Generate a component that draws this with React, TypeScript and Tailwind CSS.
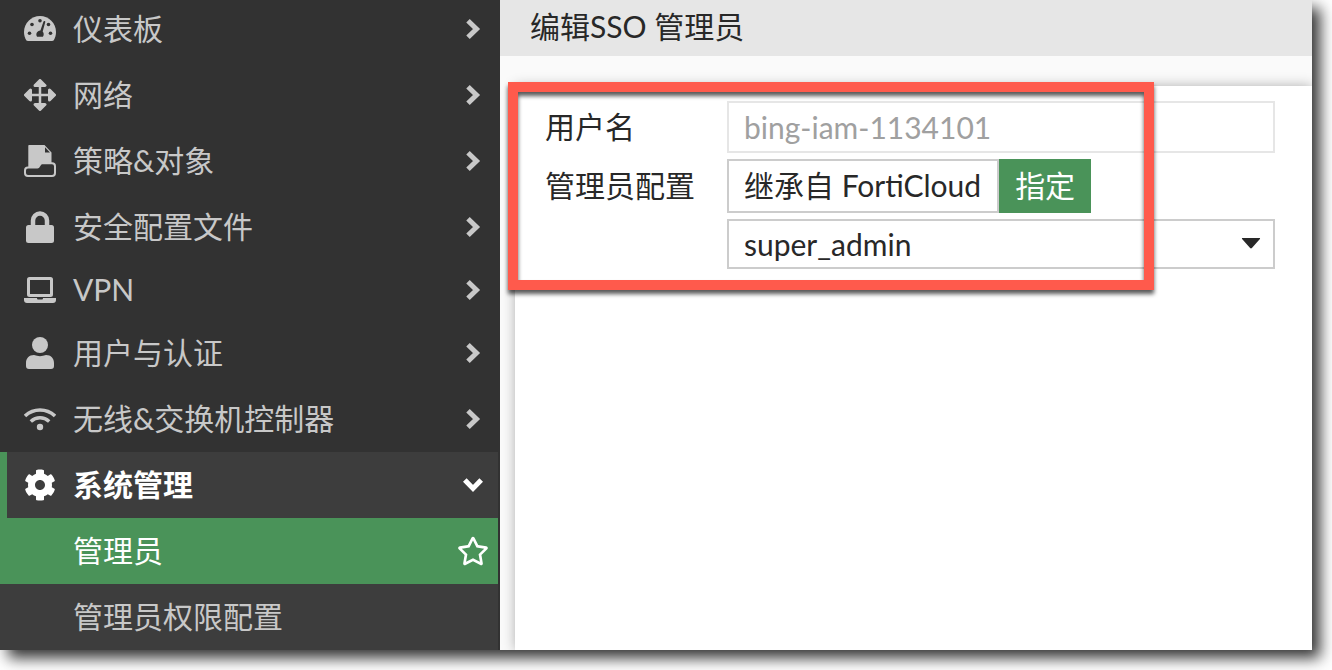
import React from "react";
import { FaCog, FaRegStar } from "react-icons/fa";

const GaugeIcon = () => (
    <svg width="32" height="32" viewBox="0 0 32 32" fill="currentColor" aria-hidden="true">
        <path d="M16 3C7.2 3 0 10.2 0 19c0 3 .8 5.600 2.200 8.200.5.600 1 .8 1.800.8h24c.8 0 1.300-.2 1.800-.8C31.200 24.600 32 22 32 19 32 10.200 24.800 3 16 3z" />
        <g fill="#323232">
            <circle cx="16" cy="7.800" r="1.800" />
            <circle cx="8" cy="11.500" r="1.800" />
            <circle cx="24.500" cy="11.500" r="1.800" />
            <circle cx="5.500" cy="20.200" r="1.800" />
            <circle cx="26.500" cy="20.200" r="1.800" />
            <path d="M19.500 8.600c.3-1 2.100-.7 1.800.5l-2.600 9.300c1.300 1.300 1.400 3.600.2 5.300h-5.800c-1.700-2.500-.3-5.700 3.300-6.100z" />
        </g>
    </svg>
);

const ArrowsIcon = () => (
    <svg width="32" height="32" viewBox="0 0 32 32" fill="currentColor" stroke="currentColor" strokeLinejoin="round" aria-hidden="true">
        <path d="M16 4v24M4 16h24" strokeWidth="2.500" />
        <path
            d="M16 1.500l5 5h-10zM16 30.500l5-5h-10zM1.500 16l5-5v10zM30.500 16l-5-5v10z"
            strokeWidth="3"
        />
    </svg>
);

const PolicyIcon = () => (
    <svg width="32" height="32" viewBox="0 0 32 32" fill="currentColor" aria-hidden="true">
        <path d="M4.300 .8C4.300 .3 4.600 0 5 0h15.500l7 7.500V18H18l-4 4.500H4.300z" />
        <path d="M21 2.300l5 5.200h-5z" fill="#323232" />
        <path
            d="M4 22.500h9.500c2 0 2-4.300 4.500-4.300h10c2 0 3 1 3 3v6.800c0 2-1 3-3 3H4c-2 0-3-1-3-3v-2.500c0-2 1-3 3-3z"
            fill="#323232"
            stroke="currentColor"
            strokeWidth="2"
        />
    </svg>
);

const LockIcon = () => (
    <svg width="32" height="32" viewBox="0 0 32 32" fill="currentColor" aria-hidden="true">
        <rect x="2" y="14" width="28" height="18" rx="2.500" />
        <path d="M9 15V9.500a7 7 0 0 1 14 0V15" fill="none" stroke="currentColor" strokeWidth="4.500" />
    </svg>
);

const LaptopIcon = () => (
    <svg width="32" height="32" viewBox="0 0 32 32" fill="currentColor" aria-hidden="true">
        <rect x="4.500" y="4.500" width="23" height="17" rx="1" fill="none" stroke="currentColor" strokeWidth="3" />
        <path d="M0 24h13c0 1.200.5 1.500 1.500 1.500h3c1 0 1.500-.3 1.500-1.500h13v2c0 1.800-1.200 3-3 3H3c-1.800 0-3-1.200-3-3z" />
    </svg>
);

const UserIcon = () => (
    <svg width="32" height="32" viewBox="0 0 32 32" fill="currentColor" aria-hidden="true">
        <circle cx="16" cy="8" r="8" />
        <path d="M10 18c4 1.500 8 1.500 12 0 5 0 8 3.500 8 8v3c0 2-1 3-3 3H5c-2 0-3-1-3-3v-3c0-4.500 3-8 8-8z" />
    </svg>
);

const WifiIcon = () => (
    <svg width="32" height="32" viewBox="0 0 32 32" fill="none" stroke="currentColor" strokeWidth="3.500" aria-hidden="true">
        <path d="M1 13c8.500-8 21.500-8 30 0M6.800 18.500c5.500-5 12.900-5 18.400 0" />
        <circle cx="16" cy="24" r="3.200" fill="currentColor" stroke="none" />
    </svg>
);

const Chevron = ({ open }: { open?: boolean }) => (
    <svg
        className={open ? "rotate-90" : ""}
        width="24"
        height="24"
        viewBox="0 0 24 24"
        fill="none"
        stroke="currentColor"
        strokeWidth="5"
        aria-hidden="true"
    >
        <path d="M7 3.800l8.500 8.200L7 20.200" />
    </svg>
);

const menu = [
    { name: "仪表板", icon: <GaugeIcon />, height: "h-[66px]" },
    { name: "网络", icon: <ArrowsIcon />, height: "h-[66px]" },
    { name: "策略&对象", icon: <PolicyIcon />, height: "h-[66px]" },
    { name: "安全配置文件", icon: <LockIcon />, height: "h-[66px]" },
    { name: "VPN", icon: <LaptopIcon />, height: "h-[60px]" },
    { name: "用户与认证", icon: <UserIcon />, height: "h-[66px]" },
    { name: "无线&交换机控制器", icon: <WifiIcon />, height: "h-[66px]" },
];

const MenuItem = ({ name, icon, height }: { name: string; icon: React.ReactNode; height: string }) => (
    <li>
        <button type="button" className={"flex w-full items-center pl-6 pr-[13px] text-left " + height}>
            <span className="w-[49px] shrink-0">{icon}</span>
            <span className="flex-1 pb-[2px]">{name}</span>
            <Chevron />
        </button>
    </li>
);

const Sidebar = () => (
    <nav className="w-[500px] shrink-0 overflow-hidden bg-[#323232] pr-[2px] text-[#c8c8c8]">
        <ul className="-mt-1">
            {menu.map((m) => (
                <MenuItem key={m.name} name={m.name} icon={m.icon} height={m.height} />
            ))}
            <li className="bg-[#3d3d3d]">
                <button
                    type="button"
                    aria-expanded="true"
                    className="flex h-[66px] w-full items-center border-l-[7px] border-[#4a9359] pl-[17px] pr-[13px] text-left font-bold text-white"
                >
                    <span className="w-[49px] shrink-0">
                        <FaCog size={32} />
                    </span>
                    <span className="flex-1 pb-[2px]">系统管理</span>
                    <Chevron open />
                </button>
                <ul>
                    <li className="flex h-[66px] items-center bg-[#4a9359] pl-[73px] pr-[9px] text-white">
                        <a href="#" className="flex-1 pb-[2px]">管理员</a>
                        <button type="button" aria-label="收藏">
                            <FaRegStar size={32} />
                        </button>
                    </li>
                    <li className="flex h-[66px] items-center pl-[73px] pr-[9px]">
                        <a href="#" className="flex-1 pb-[2px]">管理员权限配置</a>
                    </li>
                </ul>
            </li>
        </ul>
    </nav>
);

const AdminForm = () => (
    <form className="grid grid-cols-[182px_1fr] gap-y-[6px] pl-[30px] pr-[37px] pt-[15px]">
        <label htmlFor="username" className="flex items-center pb-[2px]">用户名</label>
        <input
            id="username"
            type="text"
            disabled
            defaultValue="bing-iam-1134101"
            className="h-[52px] w-full min-w-0 border-2 border-[#e6e6e6] bg-white px-[15px] text-[#a0a0a0]"
        />
        <span id="profile-label" className="flex items-center pb-[2px]">管理员配置</span>
        <div role="group" aria-labelledby="profile-label" className="flex h-[54px]">
            <button type="button" className="whitespace-nowrap border-2 border-[#cccccc] pb-[2px] pl-[15px] pr-4">
                继承自 FortiCloud
            </button>
            <button type="button" aria-pressed="true" className="whitespace-nowrap bg-[#4a9359] px-4 pb-[2px] text-white">
                指定
            </button>
        </div>
        <div className="relative col-start-2">
            <select
                aria-labelledby="profile-label"
                defaultValue="super_admin"
                className="h-[50px] w-full appearance-none border-2 border-[#cccccc] bg-white px-[15px]"
            >
                <option>super_admin</option>
            </select>
            <svg
                className="pointer-events-none absolute right-[14px] top-[18px]"
                width="20"
                height="13"
                viewBox="0 0 20 13"
                fill="currentColor"
                aria-hidden="true"
            >
                <path d="M1.500 1h17c.6 0 .8.700.4 1.100l-8 9c-.6.500-1.200.5-1.800 0l-8-9C.7 1.700.9 1 1.500 1z" />
            </svg>
        </div>
    </form>
);

const App = () => {
    return (
        <div className="flex min-h-screen bg-white pb-5 pr-5 font-['Lato','Noto_Sans_CJK_SC',sans-serif] text-[30px] leading-[44px] text-[#282828]">
            <div className="flex min-w-0 flex-1 shadow-[8px_8px_14px_rgba(0,0,0,0.8)]">
                <Sidebar />
                <main className="flex min-w-0 flex-1 flex-col bg-[#fafafa]">
                    <header className="flex h-14 items-center bg-[#e6e6e6] pb-1 pl-[30px]">
                        <h1>编辑SSO 管理员</h1>
                    </header>
                    <div className="flex flex-1 overflow-hidden pl-[15px] pt-[30px]">
                        <section className="relative min-w-0 flex-1 bg-white shadow-[0_0_12px_rgba(0,0,0,0.3)]">
                            <AdminForm />
                            <div className="pointer-events-none absolute -left-[7px] -top-1 h-[208px] w-[646px] border-10 border-[#ff5a4c] drop-shadow-[0_4px_2px_rgba(0,0,0,0.65)]"></div>
                        </section>
                    </div>
                </main>
            </div>
        </div>
    );
};

export default App;
